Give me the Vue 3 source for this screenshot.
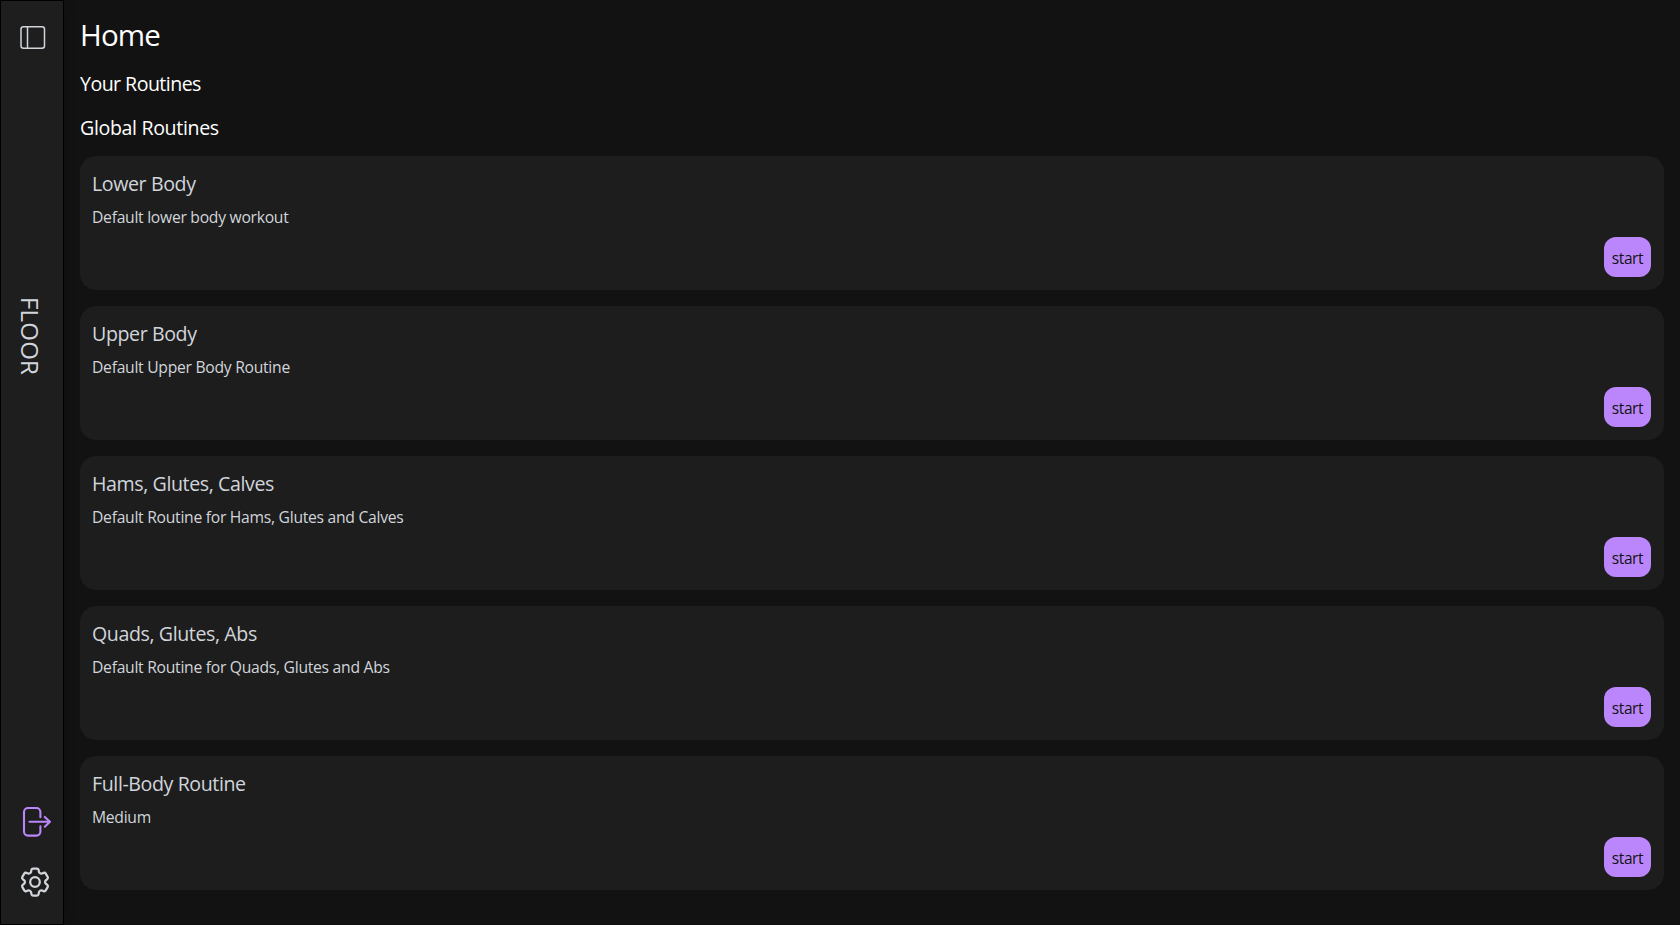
<template>
  <div class="layout">
    <aside class="sidebar">
      <button class="icon-btn toggle" aria-label="Toggle sidebar">
        <svg width="26" height="24" viewBox="0 0 26 24" fill="none" stroke="currentColor" stroke-width="1.5">
          <rect x="1" y="0.8" width="23.5" height="21.5" rx="2.5" />
          <path d="M7.5 1v21.5" />
        </svg>
      </button>

      <span class="brand">FLOOR</span>

      <div class="sidebar-actions">
        <button class="icon-btn logout" aria-label="Log out">
          <svg width="30" height="32" viewBox="0 0 30 32" fill="none" stroke="currentColor" stroke-width="2.1" stroke-linecap="round" stroke-linejoin="round">
            <path d="M18.4 11.3V6a4 4 0 0 0-4-4H6a4 4 0 0 0-4 4v19.6a4 4 0 0 0 4 4h8.4a4 4 0 0 0 4-4v-5.2" />
            <path d="M7.5 15.8H28M22.8 10.9l5.1 4.9-5.1 4.9" />
          </svg>
        </button>
        <button class="icon-btn settings" aria-label="Settings">
          <svg width="36" height="36" viewBox="0 0 24 24" fill="none" stroke="currentColor" stroke-width="1.5" stroke-linecap="round" stroke-linejoin="round">
            <path d="M9.594 3.94c.09-.542.56-.94 1.11-.94h2.593c.55 0 1.02.398 1.11.94l.213 1.281c.063.374.313.686.645.87.074.04.147.083.22.127.325.196.72.257 1.075.124l1.217-.456a1.125 1.125 0 0 1 1.37.49l1.296 2.247a1.125 1.125 0 0 1-.26 1.431l-1.003.827c-.293.241-.438.613-.43.992a7.723 7.723 0 0 1 0 .255c-.008.378.137.75.43.991l1.004.827c.424.35.534.955.26 1.43l-1.298 2.247a1.125 1.125 0 0 1-1.369.491l-1.217-.456c-.355-.133-.75-.072-1.076.124a6.47 6.47 0 0 1-.22.128c-.331.183-.581.495-.644.869l-.213 1.281c-.09.543-.56.94-1.11.94h-2.594c-.55 0-1.019-.398-1.11-.94l-.213-1.281c-.062-.374-.312-.686-.644-.87a6.52 6.52 0 0 1-.22-.127c-.325-.196-.72-.257-1.076-.124l-1.217.456a1.125 1.125 0 0 1-1.369-.49l-1.297-2.247a1.125 1.125 0 0 1 .26-1.431l1.004-.827c.292-.24.437-.613.43-.991a6.932 6.932 0 0 1 0-.255c.007-.38-.138-.751-.43-.992l-1.004-.827a1.125 1.125 0 0 1-.26-1.43l1.297-2.247a1.125 1.125 0 0 1 1.37-.491l1.216.456c.356.133.751.072 1.076-.124.072-.044.146-.086.22-.128.332-.183.582-.495.644-.869l.214-1.28Z" />
            <circle cx="12" cy="12" r="3.2" />
          </svg>
        </button>
      </div>
    </aside>

    <main class="content">
      <h1>Home</h1>
      <h2 class="yours">Your Routines</h2>
      <h2 class="global">Global Routines</h2>

      <div class="routines">
        <div v-for="routine in routines" :key="routine.name" class="card">
          <h3>{{ routine.name }}</h3>
          <p>{{ routine.description }}</p>
          <button class="start">start</button>
        </div>
      </div>
    </main>
  </div>
</template>

<script setup>
const routines = [
  { name: 'Lower Body', description: 'Default lower body workout' },
  { name: 'Upper Body', description: 'Default Upper Body Routine' },
  { name: 'Hams, Glutes, Calves', description: 'Default Routine for Hams, Glutes and Calves' },
  { name: 'Quads, Glutes, Abs', description: 'Default Routine for Quads, Glutes and Abs' },
  { name: 'Full-Body Routine', description: 'Medium' },
]
</script>

<style>
body { margin: 0; background: #121212; }
</style>

<style scoped>
.layout {
  display: flex;
  height: 100vh;
  overflow: hidden;
  background: #121212;
  color: #fff;
  font-family: 'Segoe UI', 'Open Sans', sans-serif;
}
.layout * { box-sizing: border-box; }

h1, h2, h3, p { margin: 0; font-weight: 400; white-space: nowrap; }
button { border: 0; padding: 0; font: inherit; cursor: pointer; }

/* sidebar */
.sidebar {
  display: flex; flex-direction: column; align-items: flex-start;
  width: 64px; flex-shrink: 0;
  border: 1px solid #000;
  background: #1e1e1e;
  color: #d1d5db;
  box-shadow: 0 0 12px rgba(0,0,0,.15);
}
.icon-btn { display: block; background: none; color: inherit; }
.icon-btn svg { display: block; }
.toggle { margin: 25px 0 0 19px; }

.brand {
  margin: 247px 0 0 13px;
  font-size: 24px; line-height: 32px; letter-spacing: 0.2px;
  writing-mode: vertical-rl;
}

.sidebar-actions { display: flex; flex-direction: column; gap: 26px; margin-top: auto; padding-bottom: 24px; }
.logout { margin-left: 21px; color: #bb86fc; }
.settings { margin-left: 16px; }

/* content */
.content { flex: 1; min-width: 0; padding: 17px 16px 0; }
h1 { font-size: 29.5px; line-height: 36px; letter-spacing: -0.85px; }
h2 { font-size: 19.6px; line-height: 28px; letter-spacing: -0.35px; }
.yours { margin-top: 17px; letter-spacing: -0.55px; }
.global { margin-top: 16px; }

.routines { display: flex; flex-direction: column; gap: 16px; margin-top: 14px; }
.card {
  display: flex; flex-direction: column;
  height: 134px; padding: 14px 13px 13px 12px;
  border-radius: 16px;
  background: #1d1d1d;
  color: #d1d5db;
}
h3 { font-size: 19.6px; line-height: 28px; letter-spacing: -0.4px; }
p { margin-top: 7px; font-size: 15.7px; line-height: 24px; letter-spacing: -0.28px; }

.start {
  align-self: flex-end;
  margin-top: auto;
  width: 47px; height: 40px; padding-top: 2px;
  border-radius: 12px;
  background: #bb86fc;
  color: #121212;
  font-size: 15.5px; letter-spacing: -0.4px;
}
</style>
